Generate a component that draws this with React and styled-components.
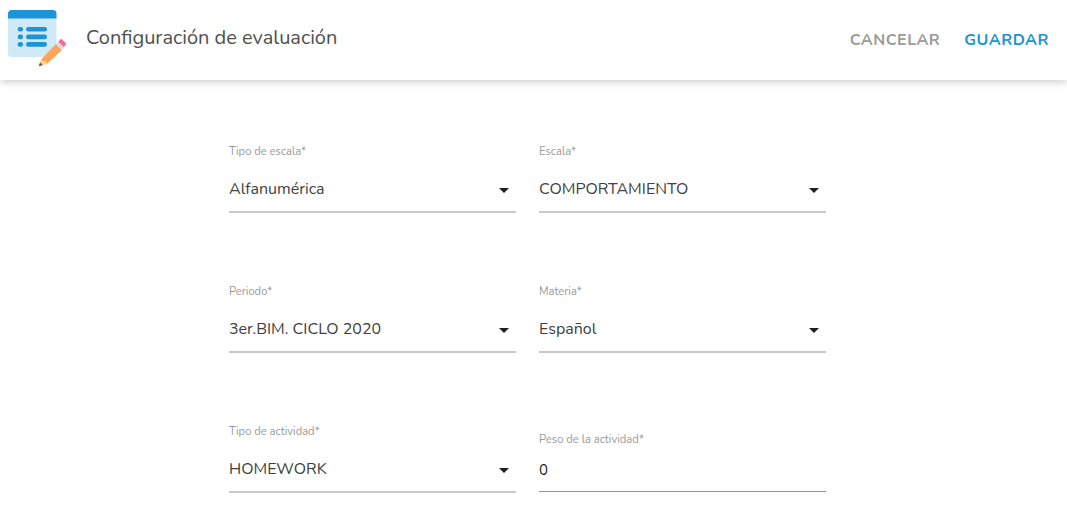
import React, { useState } from 'react';
import styled, { createGlobalStyle } from 'styled-components';

const GlobalStyle = createGlobalStyle`
  * {
    box-sizing: border-box;
  }

  body {
    margin: 0;
    background: #fff;
    font-family: Nunito, Lato, sans-serif;
    overflow: hidden;
  }
`;

const Header = styled.header`
  display: flex;
  align-items: flex-start;
  height: 80px;
  padding: 0 18px 0 6px;
  background: #fff;
  box-shadow: 0 2px 8px rgba(0, 0, 0, 0.2);
`;

const Title = styled.h1`
  margin: 24px auto 0 18px;
  font-size: 20px;
  font-weight: 400;
  line-height: 28px;
  color: #505050;
`;

const Action = styled.button`
  margin: 28px 0 0 24px;
  padding: 0;
  border: none;
  background: none;
  font-family: inherit;
  font-size: 16px;
  font-weight: 700;
  line-height: 24px;
  letter-spacing: 0.5px;
  color: ${(props) => (props.$primary ? '#1c94d6' : '#9b9b9b')};
  cursor: pointer;
`;

const Form = styled.form`
  display: grid;
  grid-template-columns: 287px 287px;
  grid-auto-rows: 70px;
  gap: 70px 23px;
  padding: 63px 0 0 229px;
`;

const Field = styled.div`
  display: flex;
  flex-direction: column;
  height: 70px;
  padding-top: 1px;
  border-bottom: 2px solid #c8c8c8;
`;

const NumberField = styled(Field)`
  height: 69px;
  padding-top: 9px;
  border-bottom: 1px solid #949494;
`;

const Label = styled.label`
  font-size: 11.2px;
  line-height: 16px;
  color: #999;
`;

const Value = styled.div`
  display: flex;
  align-items: center;
  justify-content: space-between;
  height: 24px;
  margin-top: 17px;
  padding-right: 7px;
  font-size: 16px;
  color: #404040;
`;

const Caret = styled.span`
  margin-top: 3px;
  border: 5px solid transparent;
  border-top-color: #1f1f1f;
  border-bottom: none;
`;

const Input = styled.input`
  width: 100%;
  height: 24px;
  margin-top: 10px;
  padding: 0;
  border: none;
  outline: none;
  background: none;
  font-family: inherit;
  font-size: 15px;
  color: #1f1f1f;
`;

const selects = [
  { label: 'Tipo de escala*', value: 'Alfanumérica' },
  { label: 'Escala*', value: 'COMPORTAMIENTO' },
  { label: 'Periodo*', value: '3er.BIM. CICLO 2020' },
  { label: 'Materia*', value: 'Español' },
  { label: 'Tipo de actividad*', value: 'HOMEWORK' },
];

const EvaluationIcon = () => (
  <svg width="62" height="70" viewBox="6 0 62 70">
    <rect x="8" y="10" width="48.5" height="47" rx="4" fill="#d0e9f6" />
    <path d="M8 18.500v-4.500a4 4 0 0 1 4-4h40.500a4 4 0 0 1 4 4v4.500z" fill="#1c94d6" />
    {[29.3, 36.9, 44.4].map((y) => (
      <g key={y} fill="#1c94d6">
        <rect x="17.7" y={y - 2.3} width="5.400" height="4.600" rx="2.300" />
        <rect x="26" y={y - 2.3} width="21" height="4.600" rx="2.300" />
      </g>
    ))}
    <path d="M41.2 59.2l5.6 4.800-7.300 2.200q-.7-.2-.4-.9z" fill="#ffd782" />
    <path d="M40 62.300l2.800 2.800-3.300 1.100q-.7-.2-.4-.9z" fill="#59606a" />
    <path d="M55.900 43.900l6 6L46.800 64l-1.500-2.300-2.400-.6-1.700-1.900z" fill="#ffa45a" />
    <path d="M58.600 41.400l6 6-2.700 2.500-6-6z" fill="#d9dade" />
    <path d="M60.200 39.500q.9-.8 1.800 0l3.600 3.600q.8.900 0 1.800l-1.900 2-5.400-5.400z" fill="#fc6897" />
  </svg>
);

const App = () => {
  const [weight, setWeight] = useState('0');

  return (
    <>
      <GlobalStyle />
      <Header>
        <EvaluationIcon />
        <Title>Configuración de evaluación</Title>
        <Action type="button">CANCELAR</Action>
        <Action type="button" $primary>GUARDAR</Action>
      </Header>
      <Form>
        {selects.map((item) => (
          <Field key={item.label}>
            <Label>{item.label}</Label>
            <Value>
              {item.value}
              <Caret />
            </Value>
          </Field>
        ))}
        <NumberField>
          <Label htmlFor="weight">Peso de la actividad*</Label>
          <Input id="weight" value={weight} onChange={(e) => setWeight(e.target.value)} />
        </NumberField>
      </Form>
    </>
  );
};

export default App;
